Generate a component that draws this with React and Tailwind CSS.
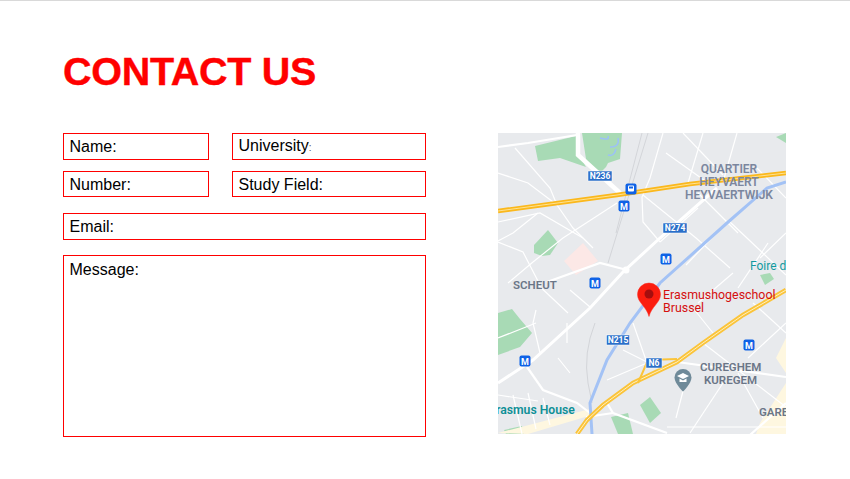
import React from 'react';

const Field = ({ label, className = '' }) => (
  <div className={`border border-[#ff0000] pl-[5.5px] text-[16px] leading-[18px] text-black ${className}`}>{label}</div>
);

const MetroBadge = ({ x, y }) => (
  <g transform={`translate(${x} ${y})`}>
    <rect x="-5.5" y="-5.5" width="11" height="11" rx="2" fill="#0f62e6" />
    <text x="0" y="3.5" textAnchor="middle" fontSize="9" fontWeight="700" fill="#fff">M</text>
  </g>
);

const RoadBadge = ({ x, y, w, label }) => (
  <g transform={`translate(${x} ${y})`}>
    <rect x={-w / 2} y="-5" width={w} height="10" fill="#2a6fc9" stroke="#fff" strokeWidth="0.5" />
    <text x="0" y="3.2" textAnchor="middle" fontSize="8.5" fontWeight="700" fill="#fff">{label}</text>
  </g>
);

const wideRoads = [
  'M0 14 L30 10 L79 2',
  'M29 234 L45 257 L79 270 L92 280',
  'M179 229 L288 244',
  'M109 270 L115 280 L169 300',
  'M115 280 L88 284',
  'M288 270 L252 302',
  'M49 149 L102 130 L129 137',
];

const thinRoads = [
  'M17 15 L52 55 L59 72 L75 95 L95 115',
  'M0 89 L42 80 L85 105',
  'M0 109 L25 119 L42 152',
  'M119 70 L65 105 L35 129',
  'M165 0 L152 45 L144 64 L145 89 L162 109',
  'M239 0 L225 49',
  'M145 62 L198 105 L232 135',
  'M232 89 L288 142',
  'M259 35 L288 65',
  'M185 0 L225 42',
  'M226 92 L188 132',
  'M38 177 L35 190 L42 220',
  'M69 190 L69 210',
  'M72 157 L92 174',
  'M125 217 L149 229',
  'M109 247 L149 230',
  'M135 190 L149 230',
  'M225 250 L192 300',
  'M205 210 L288 274',
  'M169 294 L288 294',
  'M185 258 L178 285',
  'M0 262 L40 268',
  'M15 262 L24 301 M30 260 L38 296 M45 265 L52 292',
  'M0 40 L30 50 L59 72',
  'M40 80 L15 100 L0 108',
  'M200 60 L240 100 M162 109 L200 75',
  'M255 170 L288 200',
  'M240 155 L270 110',
  'M168 20 L210 50 M205 0 L190 50',
  'M262 60 L240 80 M288 100 L262 125',
  'M10 150 L35 129 M70 180 L38 150',
  'M200 170 L235 140 M215 200 L195 175',
  'M0 205 L38 190 M60 225 L72 240',
  'M250 225 L288 190 M240 240 L265 285',
];

export default function App() {
  return (
    <div className="h-[479px] w-[850px] border-t border-[#d9d9d9] bg-white font-['Liberation_Sans',Arial,sans-serif]">
      <h1 className="ml-[63px] mt-[47px] text-[39.5px] font-bold leading-[46px] tracking-[-0.3px] text-[#ff0000] [-webkit-text-stroke:0.4px_#ff0000]">
        CONTACT US
      </h1>

      <div className="ml-[63px] mt-[39px] flex gap-[72px]">
        <div className="w-[363px]">
          <div className="grid grid-cols-[146px_194px] gap-x-[23px]">
            <Field label="Name:" className="h-[27px] pt-[4px]" />
            <Field
              label={<>University<span className="text-[10px] text-[#555]">:</span></>}
              className="h-[27px] pt-[3px]"
            />
            <Field label="Number:" className="mt-[11px] h-[26px] pt-[4px]" />
            <Field label="Study Field:" className="mt-[11px] h-[26px] pt-[4px]" />
          </div>
          <Field label="Email:" className="mt-[16px] h-[27px] pt-[4px]" />
          <Field label="Message:" className="mt-[15px] h-[182px] pt-[5px]" />
        </div>

        <svg viewBox="0 0 288 301" className="h-[301px] w-[288px] shrink-0 bg-[#e8eaed]">
          {/* parks */}
          <path d="M37 13 L78 3 L80 20 L88 34 L62 25 L40 28 Z" fill="#a8dab5" />
          <path d="M84 0 L124 0 L122 26 L110 30 L108 34 L100 42 L88 26 Z" fill="#a8dab5" />
          <path d="M36 112 L50 97 L60 110 L52 122 L44 123 L36 120 Z" fill="#a8dab5" />
          <path d="M0 180 L14 176 L22 186 L34 200 L22 214 L0 222 Z" fill="#a8dab5" />
          <path d="M142 272 L152 264 L163 280 L152 290 Z" fill="#a8dab5" />
          <path d="M113 284 L130 280 L135 301 L120 301 Z" fill="#a8dab5" />
          <path d="M6 297 L24 293 L26 301 L8 301 Z" fill="#a8dab5" />
          <path d="M278 4 L288 0 L288 10 Z" fill="#a8dab5" />
          <path d="M262 142 L272 140 L276 146 L267 152 Z" fill="#a8dab5" />
          <path d="M66 128 L85 110 L100 128 L78 142 Z" fill="#fce8e6" />
          <path d="M278 225 L288 205 L288 240 Z M262 290 L288 250 L288 301 L258 301 Z" fill="#fef7e0" />
          <path d="M0 300 L92 276 L94 282 L30 301 Z" fill="#fef7e0" />
          <path d="M102 5 Q112 8 110 3 M112 14 Q122 14 120 5 M110 22 Q116 24 118 16" fill="none" stroke="#9cc0f9" strokeWidth="1.5" />

          {/* railway lines */}
          <path d="M150 0 L110 130" stroke="#d3d5d9" strokeWidth="1" fill="none" />
          <path d="M144 0 L118 100" stroke="#d3d5d9" strokeWidth="1" fill="none" />
          <path d="M97 190 Q85 220 90 250 L94 270" stroke="#d3d5d9" strokeWidth="1" fill="none" />

          {thinRoads.map((d) => (
            <path key={d} d={d} fill="none" stroke="#fff" strokeWidth="1.2" />
          ))}
          {wideRoads.map((d) => (
            <path key={d} d={d} fill="none" stroke="#fff" strokeWidth="2.2" />
          ))}
          <path d="M80 0 L80 22 L122 60" fill="none" stroke="#fff" strokeWidth="4.500" />
          <path d="M219 55 L162 105 L125 139 L92 175 L35 227 L0 250" fill="none" stroke="#fff" strokeWidth="3" />
          <circle cx="128" cy="137" r="3.500" fill="#fff" />

          {/* rail line */}
          <path d="M288 49 L269 55 L229 90 L162 150 L132 190 L109 227 L92 270 L94 301" fill="none" stroke="#a3c2f5" strokeWidth="3" />

          {/* highways */}
          <path d="M0 78 L119 62 L192 51 L288 40" fill="none" stroke="#fbb81c" strokeWidth="4.500" />
          <path d="M0 78 L119 62 L192 51 L288 40" fill="none" stroke="#fde293" strokeWidth="1" />
          <path d="M288 157 L245 182 L205 210 L179 229 L135 250 L105 272 L89 287 L79 301" fill="none" stroke="#fbc43a" strokeWidth="4.500" />
          <path d="M288 157 L245 182 L205 210 L179 229 L135 250 L105 272 L89 287 L79 301" fill="none" stroke="#fef0c0" strokeWidth="1" />
          <path d="M179 226 L150 227 L140 250" fill="none" stroke="#fbc43a" strokeWidth="2" />

          <g fontFamily="Roboto, sans-serif">
            <RoadBadge x={102} y={43} w={24} label="N236" />
            <RoadBadge x={177} y={95} w={24} label="N274" />
            <RoadBadge x={120} y={207} w={23} label="N215" />
            <RoadBadge x={156} y={230} w={16} label="N6" />

            <g transform="translate(133 56)">
              <rect x="-5.5" y="-5.5" width="11" height="11" rx="2" fill="#0f62e6" />
              <rect x="-3" y="-3.5" width="6" height="6" rx="1" fill="#fff" />
              <rect x="-2" y="-2.5" width="4" height="2" fill="#0f62e6" />
            </g>
            <MetroBadge x={126} y={73} />
            <MetroBadge x={168} y={126} />
            <MetroBadge x={97} y={150} />
            <MetroBadge x={27} y={228} />
            <MetroBadge x={251} y={212} />

            <g fontSize="12" fontWeight="600" fill="#7b869e" textAnchor="middle">
              <text x="231" y="40">QUARTIER</text>
              <text x="231" y="53">HEYVAERT</text>
              <text x="231" y="65.500">HEYVAERTWIJK</text>
            </g>
            <g fontSize="11.5" fontWeight="600" fill="#6b7687">
              <text x="15" y="156">SCHEUT</text>
              <text x="202" y="238">CUREGHEM</text>
              <text x="206" y="251">KUREGEM</text>
              <text x="261" y="283">GARE</text>
            </g>
            <text x="252" y="137" fontSize="12" fill="#129a9f">Foire d</text>
            <text x="-2" y="281" fontSize="12.200" fontWeight="600" fill="#0e8f96">rasmus House</text>

            <g fontSize="12.400" fill="#d50f0f">
              <text x="165" y="166">Erasmushogeschool</text>
              <text x="165" y="179">Brussel</text>
            </g>

            {/* school pin */}
            <path d="M185 236 a8.500 8.500 0 0 1 8.500 8.500 c0 6 -8.500 14 -8.500 14 c0 0 -8.500 -8 -8.500 -14 a8.500 8.500 0 0 1 8.500 -8.500 Z" fill="#6f8a99" />
            <path d="M179 243 L185 240 L191 243 L185 246 Z M181.500 245.500 L185 247.500 L188.500 245.500 L188.500 249 L181.500 249 Z" fill="#fff" />

            {/* red marker */}
            <path d="M151 150 a11.500 11.500 0 0 1 11.500 11.500 c0 8 -9 12 -11.500 22 c-2.500 -10 -11.500 -14 -11.500 -22 a11.500 11.500 0 0 1 11.500 -11.500 Z" fill="#fb1d0f" stroke="#ff2d20" strokeWidth="0.5" />
            <circle cx="151" cy="161" r="4.500" fill="#a50e0e" />
          </g>
        </svg>
      </div>
    </div>
  );
}
